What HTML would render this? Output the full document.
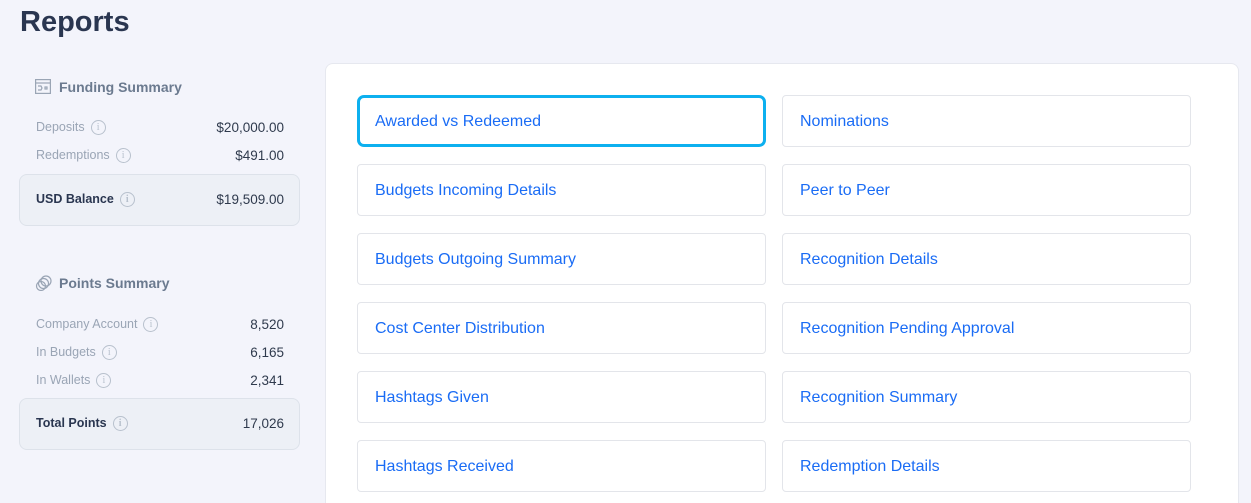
<!DOCTYPE html>
<html style="width:1251px;height:503px;overflow:hidden"><head><style>
*{box-sizing:border-box;margin:0;padding:0}
body{width:1251px;height:503px;overflow:hidden;background:#f3f4fb;font-family:"Liberation Sans",sans-serif;position:relative}
h1{position:absolute;left:20px;top:6px;font-size:29px;font-weight:bold;color:#2a3650}
.abs{position:absolute}
.hd{font-size:14px;font-weight:bold;color:#6b7a8f}
.lbl{font-size:12.5px;color:#9aa5b5}
.val{font-size:13.5px;color:#2f3a4d}
.box{position:absolute;left:19px;width:281px;height:52px;border:1px solid #dde2ea;border-radius:8px;background:#edf0f6}
.bl{font-size:12.5px;font-weight:bold;color:#2a3650}
.i{display:inline-block;width:15px;height:15px;border:1px solid #b8c1cd;border-radius:50%;font-size:10px;color:#b8c1cd;text-align:center;line-height:13px;font-family:"Liberation Serif",serif;vertical-align:middle;margin-left:6px}
.panel{position:absolute;left:325px;top:63px;width:914px;height:440px;background:#fff;border:1px solid #e6e8ef;border-bottom:none;border-radius:8px 8px 0 0}
.btn{position:absolute;width:409px;height:52px;border:1px solid #e3e5ea;border-radius:4px;background:#fff;color:#1a6cf5;font-size:16px;padding-left:17px;line-height:52px}
.sel{border:3px solid #0db0ef;border-radius:7px;padding-left:15px;line-height:48px}
</style></head><body>
<h1>Reports</h1>
<svg class="abs" style="left:35px;top:79px" width="16" height="15" viewBox="0 0 16 15" fill="none" stroke="#9aa5b5" stroke-width="1.2"><rect x="0.6" y="0.6" width="14.8" height="13.8"/><line x1="0.6" y1="4" x2="15.4" y2="4"/><path d="M3 7h3l1 2-1 2H3"/><rect x="10" y="8" width="2" height="2"/></svg>
<div class="abs hd" style="left:59px;top:79px">Funding Summary</div>
<div class="abs lbl" style="left:36px;top:120px">Deposits<span class="i">i</span></div>
<div class="abs val" style="top:120px;right:967px">$20,000.00</div>
<div class="abs lbl" style="left:36px;top:148px">Redemptions<span class="i">i</span></div>
<div class="abs val" style="top:148px;right:967px">$491.00</div>
<div class="box" style="top:174px"></div>
<div class="abs bl" style="left:36px;top:192px">USD Balance<span class="i">i</span></div>
<div class="abs val" style="top:192px;right:967px">$19,509.00</div>

<svg class="abs" style="left:35px;top:275px" width="17" height="16" viewBox="0 0 17 16" fill="none" stroke="#9aa5b5" stroke-width="1.2"><circle cx="11" cy="6" r="5"/><circle cx="8.5" cy="8.5" r="5"/><circle cx="6" cy="11" r="4.5"/></svg>
<div class="abs hd" style="left:59px;top:275px">Points Summary</div>
<div class="abs lbl" style="left:36px;top:317px">Company Account<span class="i">i</span></div>
<div class="abs val" style="top:317px;right:967px">8,520</div>
<div class="abs lbl" style="left:36px;top:345px">In Budgets<span class="i">i</span></div>
<div class="abs val" style="top:345px;right:967px">6,165</div>
<div class="abs lbl" style="left:36px;top:373px">In Wallets<span class="i">i</span></div>
<div class="abs val" style="top:373px;right:967px">2,341</div>
<div class="box" style="top:398px"></div>
<div class="abs bl" style="left:36px;top:416px">Total Points<span class="i">i</span></div>
<div class="abs val" style="top:416px;right:967px">17,026</div>

<div class="panel"></div>
<div class="btn sel" style="left:357px;top:95px">Awarded vs Redeemed</div>
<div class="btn" style="left:782px;top:95px">Nominations</div>
<div class="btn" style="left:357px;top:164px">Budgets Incoming Details</div>
<div class="btn" style="left:782px;top:164px">Peer to Peer</div>
<div class="btn" style="left:357px;top:233px">Budgets Outgoing Summary</div>
<div class="btn" style="left:782px;top:233px">Recognition Details</div>
<div class="btn" style="left:357px;top:302px">Cost Center Distribution</div>
<div class="btn" style="left:782px;top:302px">Recognition Pending Approval</div>
<div class="btn" style="left:357px;top:371px">Hashtags Given</div>
<div class="btn" style="left:782px;top:371px">Recognition Summary</div>
<div class="btn" style="left:357px;top:440px">Hashtags Received</div>
<div class="btn" style="left:782px;top:440px">Redemption Details</div>
</body></html>
